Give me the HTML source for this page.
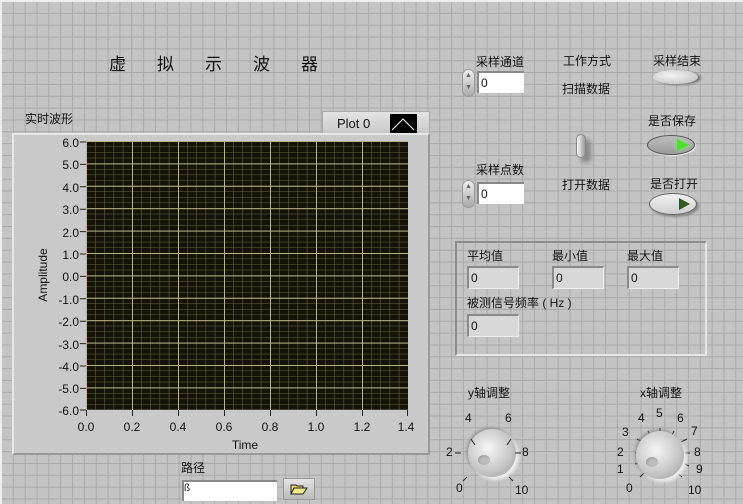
<!DOCTYPE html>
<html><head><meta charset="utf-8">
<style>
*{margin:0;padding:0;box-sizing:border-box}
body{width:743px;height:504px;overflow:hidden;position:relative;
background-color:#c4c4c4;
background-image:linear-gradient(to right,#a9a9a9 1px,transparent 1px),linear-gradient(to bottom,#a9a9a9 1px,transparent 1px);
background-size:11.85px 11.85px;background-position:1px 1px;
font-family:"Liberation Sans","Noto Sans CJK SC",sans-serif;color:#111;font-size:12px}
.a{position:absolute}
.t{position:absolute;white-space:nowrap;font-size:12px}
.num{position:absolute;background:#fff;border-top:2px solid #888;border-left:2px solid #888;font-size:12px;padding:3px 0 0 2px}
.ind{position:absolute;background:#d8d8d8;border-top:2px solid #8a8a8a;border-left:2px solid #8a8a8a;border-right:1px solid #eee;border-bottom:1px solid #eee;font-size:12px;padding:3px 0 0 2px}
.spin{position:absolute;width:13px;height:28px;border-radius:7px;background:linear-gradient(#eee,#aaa);border:1px solid #999;font-size:7px;color:#666;text-align:center;line-height:12px}
</style></head><body>
<div class="a" style="left:0;top:0;width:743px;height:2px;background:#eee"></div>
<div class="a" style="left:0;top:0;width:2px;height:504px;background:#eee"></div>

<div class="t" style="left:109px;top:50px;font-size:17px;letter-spacing:31px">虚拟示波器</div>

<!-- graph -->
<div class="t" style="left:25px;top:110px">实时波形</div>
<div class="a" style="left:322px;top:111px;width:108px;height:24px;background:linear-gradient(#e4e4e4,#c8c8c8);border:1px solid #aaa"></div>
<div class="t" style="left:337px;top:116px;font-size:13px">Plot 0</div>
<div class="a" style="left:390px;top:114px;width:27px;height:19px;background:#000">
<svg width="27" height="19"><polyline points="2,16 13,5 24,16" fill="none" stroke="#fff" stroke-width="1"/></svg></div>
<div class="a" style="left:12px;top:133px;width:418px;height:322px;background:#c9c9c9;border-top:2px solid #e8e8e8;border-left:2px solid #e8e8e8;border-right:2px solid #999;border-bottom:2px solid #999"></div>
<svg class="a" style="left:0;top:0" width="743" height="504">
<defs>
<pattern id="mn" x="86" y="141" width="9.2" height="5.6" patternUnits="userSpaceOnUse">
<path d="M0 0V5.6M0 0H9.2" stroke="#6b6a45" stroke-width="1" fill="none"/></pattern>
<pattern id="mj" x="86" y="141" width="46" height="22.4" patternUnits="userSpaceOnUse">
<path d="M0.5 0V22.4M0 0.5H46" stroke="#b8b588" stroke-width="1" fill="none"/></pattern>
</defs>
<rect x="86" y="141" width="322" height="269" fill="#151208"/>
<rect x="86" y="141" width="322" height="269" fill="url(#mn)"/>
<rect x="86" y="141" width="322" height="269" fill="url(#mj)"/>
<g stroke="#222" stroke-width="1">
<path d="M80 142H86M80 164.4H86M80 186.8H86M80 209.2H86M80 231.6H86M80 254H86M80 276.4H86M80 298.8H86M80 321.2H86M80 343.6H86M80 366H86M80 388.4H86M80 410H86"/>
<path d="M86.5 410V416M132.5 410V416M178.5 410V416M224.5 410V416M270.5 410V416M316.5 410V416M362.5 410V416M407.5 410V416"/>
</g>
<g font-family="Liberation Sans,sans-serif" font-size="12" fill="#111" text-anchor="end">
<text x="79" y="147">6.0</text><text x="79" y="169">5.0</text><text x="79" y="192">4.0</text><text x="79" y="214">3.0</text><text x="79" y="237">2.0</text><text x="79" y="259">1.0</text><text x="79" y="281">0.0</text><text x="79" y="304">-1.0</text><text x="79" y="326">-2.0</text><text x="79" y="349">-3.0</text><text x="79" y="371">-4.0</text><text x="79" y="393">-5.0</text><text x="79" y="415">-6.0</text>
</g>
<g font-family="Liberation Sans,sans-serif" font-size="12" fill="#111" text-anchor="middle">
<text x="86" y="431">0.0</text><text x="132" y="431">0.2</text><text x="178" y="431">0.4</text><text x="224" y="431">0.6</text><text x="270" y="431">0.8</text><text x="316" y="431">1.0</text><text x="362" y="431">1.2</text><text x="406" y="431">1.4</text>
<text x="245" y="449">Time</text>
<text x="0" y="0" transform="translate(47 275) rotate(-90)">Amplitude</text>
</g>
</svg>

<!-- right top -->
<div class="t" style="left:476px;top:53px">采样通道</div>
<div class="spin" style="left:462px;top:69px">▲<br>▼</div>
<div class="num" style="left:477px;top:71px;width:47px;height:22px">0</div>
<div class="t" style="left:563px;top:52px">工作方式</div>
<div class="t" style="left:562px;top:80px">扫描数据</div>
<div class="t" style="left:653px;top:52px">采样结束</div>
<div class="a" style="left:653px;top:70px;width:45px;height:14px;border-radius:50%;background:radial-gradient(ellipse at 40% 40%,#f4f4f4,#bbb);box-shadow:3px 1px 2px #777"></div>

<div class="t" style="left:476px;top:161px">采样点数</div>
<div class="spin" style="left:462px;top:180px">▲<br>▼</div>
<div class="num" style="left:477px;top:182px;width:47px;height:22px">0</div>

<div class="a" style="left:576px;top:134px;width:10px;height:24px;border-radius:5px;background:linear-gradient(to right,#fafafa,#999);border:1px solid #888;box-shadow:5px 5px 5px #888"></div>
<div class="t" style="left:562px;top:176px">打开数据</div>

<div class="t" style="left:648px;top:112px">是否保存</div>
<div class="a" style="left:647px;top:135px;width:48px;height:20px;border-radius:50%;background:linear-gradient(#bdbdbd,#9a9a9a);border:1px solid #555;box-shadow:1px 1px 1px #eee"></div>
<div class="a" style="left:677px;top:139px;width:0;height:0;border-left:12px solid #4de02a;border-top:6px solid transparent;border-bottom:6px solid transparent;filter:drop-shadow(0 0 2px #7f7)"></div>
<div class="t" style="left:650px;top:175px">是否打开</div>
<div class="a" style="left:649px;top:193px;width:48px;height:22px;border-radius:50%;background:linear-gradient(#f2f2f2,#cfcfcf);border:1px solid #666;box-shadow:2px 2px 2px #888"></div>
<div class="a" style="left:679px;top:198px;width:0;height:0;border-left:11px solid #2f5a1e;border-top:6px solid transparent;border-bottom:6px solid transparent"></div>

<!-- stats box -->
<div class="a" style="left:455px;top:241px;width:252px;height:115px;border:2px solid #8d8d8d;border-right-color:#e6e6e6;border-bottom-color:#e6e6e6"></div>
<div class="t" style="left:467px;top:247px">平均值</div>
<div class="t" style="left:552px;top:247px">最小值</div>
<div class="t" style="left:627px;top:247px">最大值</div>
<div class="ind" style="left:467px;top:266px;width:52px;height:23px">0</div>
<div class="ind" style="left:552px;top:266px;width:52px;height:23px">0</div>
<div class="ind" style="left:627px;top:266px;width:52px;height:23px">0</div>
<div class="t" style="left:467px;top:294px">被测信号频率 ( Hz )</div>
<div class="ind" style="left:467px;top:314px;width:52px;height:23px">0</div>

<!-- knobs -->
<div class="t" style="left:468px;top:384px">y轴调整</div>
<div class="a" style="left:468px;top:429px;width:48px;height:48px;border-radius:50%;background:radial-gradient(circle at 42% 40%,#f6f6f6,#c8c8c8 55%,#999);box-shadow:3px 3px 3px #eee,-1px -1px 3px #888"></div>
<div class="a" style="left:478px;top:455px;width:12px;height:10px;border-radius:50%;background:#bdbdbd;box-shadow:inset 1px 1px 2px #999"></div>
<svg class="a" style="left:430px;top:370px" width="313" height="134">
<g stroke="#222" stroke-width="1" fill="none">
<path transform="translate(0 2)" d="M41 67L45 73M77 73L81 67M25 81H31M85 81H91M33 109L37 105M79 105L83 109"/>
<path transform="translate(16 2)" d="M194 105L198 101M189 92L194 91M189 81H195M191 67L197 70M202 59L205 65M214 56V62M225 65L228 59M235 70L241 67M237 81H244M237 91L243 94M231 101L236 105"/>
</g>
<g font-family="Liberation Sans,sans-serif" font-size="12" fill="#111">
<text x="35" y="52">4</text><text x="75" y="52">6</text><text x="16" y="86">2</text><text x="92" y="86">8</text><text x="26" y="122">0</text><text x="85" y="124">10</text>
<g transform="translate(4 0)">
<text x="192" y="122">0</text><text x="183" y="103">1</text><text x="183" y="86">2</text><text x="188" y="66">3</text><text x="204" y="52">4</text><text x="222" y="47">5</text><text x="243" y="52">6</text><text x="257" y="65">7</text><text x="260" y="86">8</text><text x="262" y="103">9</text><text x="254" y="124">10</text>
</g>
</g>
</svg>
<div class="t" style="left:640px;top:384px">x轴调整</div>
<div class="a" style="left:636px;top:431px;width:48px;height:48px;border-radius:50%;background:radial-gradient(circle at 42% 40%,#f6f6f6,#c8c8c8 55%,#999);box-shadow:3px 3px 3px #eee,-1px -1px 3px #888"></div>
<div class="a" style="left:646px;top:457px;width:12px;height:10px;border-radius:50%;background:#bdbdbd;box-shadow:inset 1px 1px 2px #999"></div>

<!-- path -->
<div class="t" style="left:181px;top:459px">路径</div>
<div class="a" style="left:182px;top:480px;width:95px;height:21px;background:#fff;border-top:2px solid #888;border-left:2px solid #888"></div>
<div class="t" style="left:184px;top:483px;font-size:10px">ß</div>
<div class="a" style="left:283px;top:478px;width:32px;height:22px;background:linear-gradient(#e4e4e4,#bbb);border:1px solid #999"></div>
<svg class="a" style="left:290px;top:482px" width="18" height="14"><path d="M1 3H6L7 4H13V6H4L1 12Z" fill="#e8d870" stroke="#222"/><path d="M4 6H17L13 12H1Z" fill="#f4ec8a" stroke="#222"/></svg>
</body></html>
